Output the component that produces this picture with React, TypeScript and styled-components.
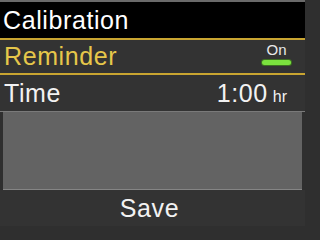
import React from 'react';
import styled, { createGlobalStyle } from 'styled-components';

const GlobalStyle = createGlobalStyle`
  html, body {
    margin: 0;
    padding: 0;
    background: #2f2f2f;
  }
  body {
    font-family: "Liberation Sans", Arial, sans-serif;
  }
`;

const Screen = styled.div`
  width: 305px;
  height: 226px;
  display: flex;
  flex-direction: column;
  background: #2f2f2f;
  border-top: 2px solid #6a6a6a;
  box-sizing: border-box;
  overflow: hidden;
`;

const Header = styled.div`
  height: 36px;
  background: #000;
  color: #fff;
  font-size: 25px;
  display: flex;
  align-items: center;
  padding-left: 3px;
  letter-spacing: 0.6px;
`;

const Row = styled.div<{ selected?: boolean }>`
  height: ${({ selected }) => (selected ? '33px' : '36px')};
  display: flex;
  align-items: center;
  justify-content: space-between;
  padding: 0 18px 0 4px;
  background: #333333;
  color: ${({ selected }) => (selected ? '#e6c74a' : '#f2f2f2')};
  font-size: 25px;
  letter-spacing: 0.6px;
  border-top: ${({ selected }) => (selected ? '2px solid #c9a531' : 'none')};
  border-bottom: ${({ selected }) => (selected ? '2px solid #c9a531' : '1px solid #7a7a7a')};
`;

const Value = styled.div`
  display: flex;
  align-items: baseline;
  gap: 5px;
  color: #f2f2f2;
`;

const Unit = styled.span`
  font-size: 16px;
  letter-spacing: 0;
`;

const Toggle = styled.div`
  display: flex;
  flex-direction: column;
  align-items: center;
  gap: 3px;
  margin-top: -6px;
  margin-right: -4px;
`;

const ToggleLabel = styled.span`
  color: #e8e8e8;
  font-size: 15px;
  line-height: 15px;
  letter-spacing: 0;
`;

const Pill = styled.div`
  width: 29px;
  height: 5px;
  border-radius: 3px;
  background: #7be23e;
  box-shadow: 0 0 0 1px #3d6f22;
`;

const Panel = styled.div`
  flex: 1;
  margin: 0 3px;
  background: #636363;
  border-bottom: 1px solid #858585;
`;

const Footer = styled.div`
  height: 36px;
  background: #333333;
  color: #f2f2f2;
  font-size: 25px;
  letter-spacing: 0.6px;
  display: flex;
  align-items: center;
  justify-content: center;
  padding-right: 6px;
`;

export default function App() {
  return (
    <>
      <GlobalStyle />
      <Screen>
        <Header>Calibration</Header>
        <Row selected>
          <span>Reminder</span>
          <Toggle>
            <ToggleLabel>On</ToggleLabel>
            <Pill />
          </Toggle>
        </Row>
        <Row>
          <span>Time</span>
          <Value>
            1:00<Unit>hr</Unit>
          </Value>
        </Row>
        <Panel />
        <Footer>Save</Footer>
      </Screen>
    </>
  );
}
